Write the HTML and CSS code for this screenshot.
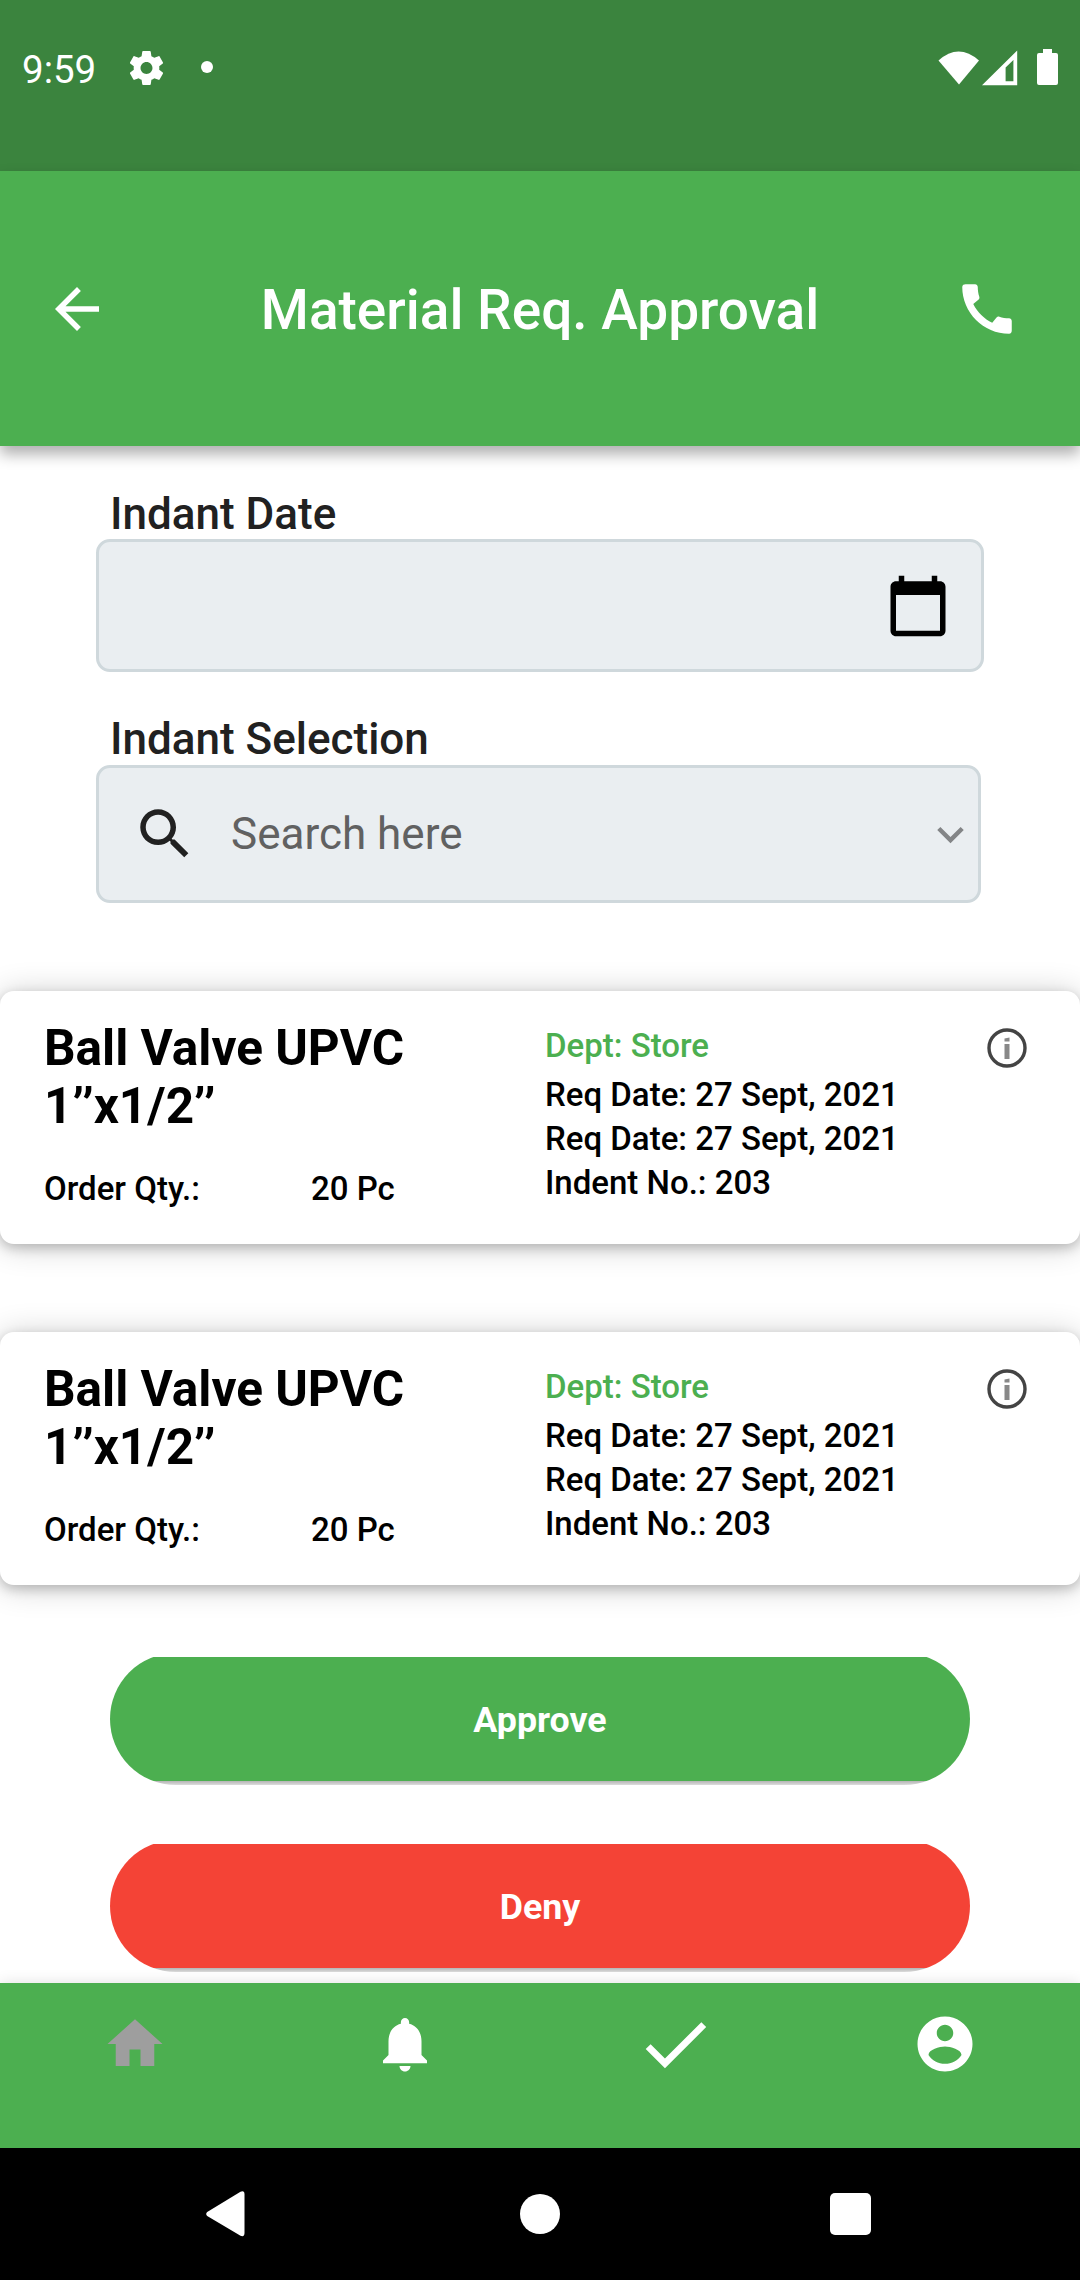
FILE: index.html
```html
<!DOCTYPE html>
<html lang="en">
<head>
<meta charset="utf-8">
<title>Material Req. Approval</title>
<link rel="stylesheet" href="styles.css">
</head>
<body>
<div class="screen">
  <div class="status-bar">
    <span class="clock">9:59</span>
    <svg class="gear" viewBox="0 0 24 24"><path d="M19.43 12.98c.04-.32.07-.64.07-.98s-.03-.66-.07-.98l2.11-1.65c.19-.15.24-.42.12-.64l-2-3.46c-.12-.22-.39-.3-.61-.22l-2.49 1c-.52-.4-1.08-.73-1.69-.98l-.38-2.65C14.46 2.18 14.25 2 14 2h-4c-.25 0-.46.18-.49.42l-.38 2.65c-.61.25-1.17.59-1.69.98l-2.49-1c-.23-.09-.49 0-.61.22l-2 3.46c-.13.22-.07.49.12.64l2.11 1.65c-.04.32-.07.65-.07.98s.03.66.07.98l-2.11 1.65c-.19.15-.24.42-.12.64l2 3.46c.12.22.39.3.61.22l2.49-1c.52.4 1.08.73 1.69.98l.38 2.65c.03.24.24.42.49.42h4c.25 0 .46-.18.49-.42l.38-2.65c.61-.25 1.17-.59 1.69-.98l2.49 1c.23.09.49 0 .61-.22l2-3.46c.12-.22.07-.49-.12-.64l-2.11-1.65zM12 15.5c-1.93 0-3.5-1.57-3.5-3.5s1.57-3.5 3.5-3.5 3.5 1.57 3.5 3.5-1.57 3.5-3.5 3.5z"/></svg>
    <span class="dot"></span>
    <svg class="signals" viewBox="0 0 122 38"><path d="M.5 11.500Q20.500-6.500 41 11.500L21 35.500Z"/><path fill-rule="evenodd" d="M44 36.300L79.200 1.500V36.300ZM67.600 32.300H75.400V11L67.600 18.500Z"/><path d="M105 0h9v4h4q2 0 2 2v28q0 2-2 2h-17q-2 0-2-2V6q0-2 2-2h4z"/></svg>
  </div>

  <header class="app-bar">
    <svg class="icon" viewBox="0 0 24 24"><path d="M20 11H7.830l5.590-5.590L12 4l-8 8 8 8 1.410-1.410L7.830 13H20v-2z"/></svg>
    <h1 class="page-title">Material Req. Approval</h1>
    <svg class="icon" viewBox="0 0 24 24"><path d="M20.010 15.380c-1.230 0-2.420-.2-3.530-.56-.35-.12-.74-.03-1.010.24l-1.570 1.970c-2.830-1.350-5.480-3.900-6.890-6.830l1.950-1.660c.27-.28.35-.67.24-1.020-.37-1.110-.56-2.300-.56-3.530 0-.54-.45-.99-.99-.99H4.190C3.650 3 3 3.240 3 3.990 3 13.280 10.730 21 20.010 21c.71 0 .99-.63.99-1.180v-3.450c0-.54-.45-.99-.99-.99z"/></svg>
  </header>

  <main class="content">
    <div class="label label-first">Indant Date</div>
    <div class="field date-field">
      <svg class="icon" viewBox="0 0 24 24"><path d="M20 3h-1V1h-2v2H7V1H5v2H4c-1.100 0-2 .9-2 2v16c0 1.100.9 2 2 2h16c1.100 0 2-.9 2-2V5c0-1.100-.9-2-2-2zm0 18H4V8h16v13z"/></svg>
    </div>
    <div class="label label-next">Indant Selection</div>
    <div class="field search-field">
      <svg class="icon" viewBox="0 0 24 24"><path d="M15.500 14h-.79l-.28-.27C15.410 12.590 16 11.110 16 9.500 16 5.910 13.090 3 9.500 3S3 5.910 3 9.500 5.910 16 9.500 16c1.610 0 3.090-.59 4.230-1.570l.27.28v.79l5 4.990L20.490 19l-4.990-5zm-6 0C7.010 14 5 11.990 5 9.500S7.010 5 9.500 5 14 7.010 14 9.500 11.990 14 9.500 14z"/></svg>
      <span class="placeholder">Search here</span>
      <svg class="chevron" viewBox="0 0 24 24"><path d="M16.590 8.590L12 13.170 7.410 8.590 6 10l6 6 6-6z"/></svg>
    </div>

    <div class="cards">
      <article class="card">
        <div class="item">
          <h2 class="item-name">Ball Valve UPVC<br>1’’x1/2’’</h2>
          <div class="quantity"><span>Order Qty.:</span><span>20 Pc</span></div>
        </div>
        <div class="details">
          <p class="dept">Dept: Store</p>
          <p>Req Date: 27 Sept, 2021</p>
          <p>Req Date: 27 Sept, 2021</p>
          <p>Indent No.: 203</p>
        </div>
        <svg class="info" viewBox="0 0 40 40"><circle cx="20" cy="20" r="18"/><path d="M17.500 10.500l5-1v4h-5zM17.500 16h5v15h-5z"/></svg>
      </article>
      <article class="card">
        <div class="item">
          <h2 class="item-name">Ball Valve UPVC<br>1’’x1/2’’</h2>
          <div class="quantity"><span>Order Qty.:</span><span>20 Pc</span></div>
        </div>
        <div class="details">
          <p class="dept">Dept: Store</p>
          <p>Req Date: 27 Sept, 2021</p>
          <p>Req Date: 27 Sept, 2021</p>
          <p>Indent No.: 203</p>
        </div>
        <svg class="info" viewBox="0 0 40 40"><circle cx="20" cy="20" r="18"/><path d="M17.500 10.500l5-1v4h-5zM17.500 16h5v15h-5z"/></svg>
      </article>
    </div>

    <div class="actions">
      <button class="button approve">Approve</button>
      <button class="button deny">Deny</button>
    </div>
  </main>

  <nav class="tabs">
    <svg class="icon active" viewBox="0 0 24 24"><path d="M10 20v-6h4v6h5v-8h3L12 3 2 12h3v8z"/></svg>
    <svg class="icon" viewBox="0 0 24 24"><path d="M12 22c1.100 0 2-.9 2-2h-4c0 1.100.89 2 2 2zm6-6v-5c0-3.070-1.640-5.640-4.500-6.320V4c0-.83-.67-1.500-1.500-1.500s-1.500.67-1.500 1.500v.68C7.630 5.360 6 7.920 6 11v5l-2 2v1h16v-1l-2-2z"/></svg>
    <svg class="icon large" viewBox="0 0 24 24"><path d="M9 16.170L4.830 12l-1.420 1.410L9 19 21 7l-1.410-1.410z"/></svg>
    <svg class="icon" viewBox="0 0 24 24"><path d="M12 2C6.480 2 2 6.480 2 12s4.480 10 10 10 10-4.480 10-10S17.520 2 12 2zm0 3c1.660 0 3 1.340 3 3s-1.340 3-3 3-3-1.340-3-3 1.340-3 3-3zm0 14.200c-2.500 0-4.710-1.280-6-3.220.03-1.990 4-3.080 6-3.080 1.990 0 5.970 1.090 6 3.080-1.290 1.940-3.500 3.220-6 3.220z"/></svg>
  </nav>

  <div class="system-nav">
    <svg class="back" viewBox="0 0 39 46"><path d="M34.500.8Q38.500-.8 38.500 3.500V42Q38.500 46.300 34.500 44.700L1.200 25Q-.8 23 1.200 21Z"/></svg>
    <span class="home"></span>
    <span class="recents"></span>
  </div>
</div>
</body>
</html>
```
FILE: styles.css
```css
* {
  box-sizing: border-box;
}

body {
  margin: 0;
  font-family: Roboto, "Noto Sans", sans-serif;
  background: #fff;
}

h1, h2, p {
  margin: 0;
}

svg {
  display: block;
  flex: none;
  fill: currentColor;
}

.screen {
  display: flex;
  flex-direction: column;
  width: 1080px;
  height: 2280px;
  overflow: hidden;
}

.icon {
  width: 66px;
  height: 66px;
}

/* Status bar */
.status-bar {
  display: flex;
  flex: none;
  align-items: flex-start;
  height: 171px;
  padding: 46px 20px 0 22px;
  color: #fff;
  background: #3b843e;
}

.clock {
  width: 104px;
  padding-top: 1px;
  font-size: 38.5px;
  line-height: 46px;
}

.gear {
  width: 41px;
  height: 42px;
  margin-top: 1px;
}

.dot {
  width: 12px;
  height: 12px;
  margin: 15px 0 0 34px;
  border-radius: 50%;
  background: #fff;
}

.signals {
  width: 122px;
  height: 38px;
  margin: 3px 0 0 auto;
}

/* App bar */
.app-bar {
  z-index: 1;
  display: flex;
  flex: none;
  align-items: center;
  justify-content: space-between;
  height: 275px;
  padding: 0 60px 0 44px;
  color: #fff;
  background: #4caf50;
  box-shadow: 0 8px 14px rgba(0, 0, 0, 0.32);
}

.page-title {
  padding: 2px 0 0 16px;
  font-size: 55px;
  font-weight: 500;
  line-height: 64px;
}

/* Form */
.content {
  display: flex;
  flex: none;
  flex-direction: column;
  height: 1537px;
  padding-top: 42px;
}

.label {
  padding-left: 110px;
  color: #212121;
  font-size: 44px;
  font-weight: 500;
  line-height: 51px;
}

.label-first {
  height: 51px;
  line-height: 53px;
}

.label-next {
  margin-top: 42px;
}

.field {
  display: flex;
  align-items: center;
  margin-left: 96px;
  border: 3px solid #cfd8dc;
  border-radius: 14px;
  background: #eaeef1;
}

.date-field {
  justify-content: flex-end;
  width: 888px;
  height: 133px;
  padding-right: 30px;
}

.search-field {
  width: 885px;
  height: 138px;
  padding: 0 1px 0 33px;
  color: #212121;
}

.placeholder {
  margin-left: 33px;
  color: #616161;
  font-size: 44px;
}

.chevron {
  width: 53px;
  height: 53px;
  margin-left: auto;
  color: #838587;
}

/* Requisition cards */
.cards {
  display: flex;
  flex-direction: column;
  gap: 88px;
  margin-top: 88px;
}

.card {
  display: flex;
  height: 253px;
  padding: 28px 53px 0 44px;
  border-radius: 14px;
  background: #fff;
  box-shadow: 0 2px 32px rgba(0, 0, 0, 0.2), 0 4px 12px rgba(0, 0, 0, 0.2);
}

.item {
  width: 501px;
}

.item-name {
  font-size: 49.5px;
  font-weight: 700;
  line-height: 58px;
}

.quantity {
  display: flex;
  margin-top: 35px;
  font-size: 33px;
  font-weight: 500;
  line-height: 38px;
}

.quantity span:first-child {
  width: 267px;
}

.details {
  padding-top: 5px;
  font-size: 33px;
  font-weight: 500;
  line-height: 44px;
}

.dept {
  margin-bottom: 5px;
  color: #4caf50;
}

.info {
  width: 40px;
  height: 40px;
  margin: 9px 0 0 auto;
  color: #888;
}

.info circle {
  fill: none;
  stroke: #444;
  stroke-width: 3.4;
}

/* Actions */
.actions {
  display: flex;
  flex-direction: column;
  gap: 55px;
  margin: 68px 110px 0;
}

.button {
  height: 132px;
  padding: 2px 0 0;
  border: 0;
  border-radius: 66px;
  color: #fff;
  font-family: inherit;
  font-size: 35.75px;
  font-weight: 700;
}

/* The fill stops short of the rounded outline, leaving a thin shadow beneath. */
.approve {
  background: linear-gradient(transparent 4px, #4caf50 4px 128px, #b4b4b4 128px, #dcdcdc);
}

.deny {
  background: linear-gradient(transparent 4px, #f44336 4px 128px, #b4b4b4 128px, #dcdcdc);
}

/* Bottom tabs */
.tabs {
  display: grid;
  flex: none;
  grid-template-columns: repeat(4, 1fr);
  align-items: center;
  justify-items: center;
  height: 165px;
  padding-bottom: 43px;
  color: #fff;
  background: #4caf50;
  box-shadow: 0 0 14px rgba(0, 0, 0, 0.12);
}

.active {
  color: #9e9e9e;
}

.large {
  width: 82.5px;
  height: 82.5px;
}

/* System navigation */
.system-nav {
  z-index: 1;
  display: flex;
  flex: none;
  align-items: center;
  justify-content: space-between;
  height: 132px;
  padding: 0 209px 0 206px;
  color: #fff;
  background: #000;
}

.back {
  width: 39px;
  height: 46px;
}

.home {
  width: 40px;
  height: 40px;
  margin-left: 5px;
  border-radius: 50%;
  background: #fff;
}

.recents {
  width: 41px;
  height: 42px;
  border-radius: 5px;
  background: #fff;
}
```
